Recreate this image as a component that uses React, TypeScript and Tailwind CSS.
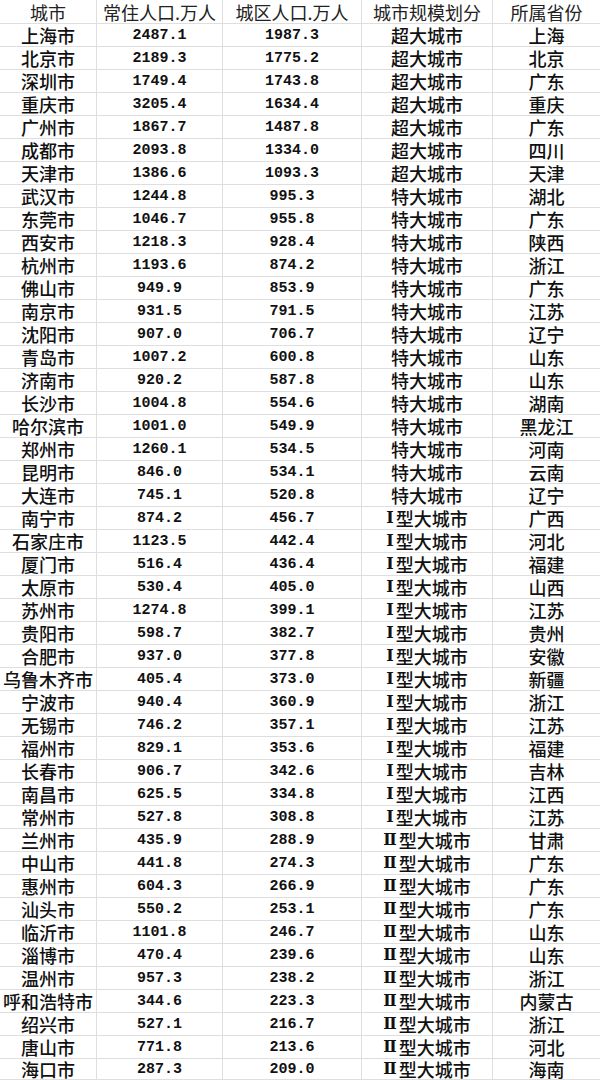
const rows: [string, string, string, string, string][] = [
  ["上海市", "2487.1", "1987.3", "超大城市", "上海"],
  ["北京市", "2189.3", "1775.2", "超大城市", "北京"],
  ["深圳市", "1749.4", "1743.8", "超大城市", "广东"],
  ["重庆市", "3205.4", "1634.4", "超大城市", "重庆"],
  ["广州市", "1867.7", "1487.8", "超大城市", "广东"],
  ["成都市", "2093.8", "1334.0", "超大城市", "四川"],
  ["天津市", "1386.6", "1093.3", "超大城市", "天津"],
  ["武汉市", "1244.8", "995.3", "特大城市", "湖北"],
  ["东莞市", "1046.7", "955.8", "特大城市", "广东"],
  ["西安市", "1218.3", "928.4", "特大城市", "陕西"],
  ["杭州市", "1193.6", "874.2", "特大城市", "浙江"],
  ["佛山市", "949.9", "853.9", "特大城市", "广东"],
  ["南京市", "931.5", "791.5", "特大城市", "江苏"],
  ["沈阳市", "907.0", "706.7", "特大城市", "辽宁"],
  ["青岛市", "1007.2", "600.8", "特大城市", "山东"],
  ["济南市", "920.2", "587.8", "特大城市", "山东"],
  ["长沙市", "1004.8", "554.6", "特大城市", "湖南"],
  ["哈尔滨市", "1001.0", "549.9", "特大城市", "黑龙江"],
  ["郑州市", "1260.1", "534.5", "特大城市", "河南"],
  ["昆明市", "846.0", "534.1", "特大城市", "云南"],
  ["大连市", "745.1", "520.8", "特大城市", "辽宁"],
  ["南宁市", "874.2", "456.7", "Ⅰ", "广西"],
  ["石家庄市", "1123.5", "442.4", "Ⅰ", "河北"],
  ["厦门市", "516.4", "436.4", "Ⅰ", "福建"],
  ["太原市", "530.4", "405.0", "Ⅰ", "山西"],
  ["苏州市", "1274.8", "399.1", "Ⅰ", "江苏"],
  ["贵阳市", "598.7", "382.7", "Ⅰ", "贵州"],
  ["合肥市", "937.0", "377.8", "Ⅰ", "安徽"],
  ["乌鲁木齐市", "405.4", "373.0", "Ⅰ", "新疆"],
  ["宁波市", "940.4", "360.9", "Ⅰ", "浙江"],
  ["无锡市", "746.2", "357.1", "Ⅰ", "江苏"],
  ["福州市", "829.1", "353.6", "Ⅰ", "福建"],
  ["长春市", "906.7", "342.6", "Ⅰ", "吉林"],
  ["南昌市", "625.5", "334.8", "Ⅰ", "江西"],
  ["常州市", "527.8", "308.8", "Ⅰ", "江苏"],
  ["兰州市", "435.9", "288.9", "Ⅱ", "甘肃"],
  ["中山市", "441.8", "274.3", "Ⅱ", "广东"],
  ["惠州市", "604.3", "266.9", "Ⅱ", "广东"],
  ["汕头市", "550.2", "253.1", "Ⅱ", "广东"],
  ["临沂市", "1101.8", "246.7", "Ⅱ", "山东"],
  ["淄博市", "470.4", "239.6", "Ⅱ", "山东"],
  ["温州市", "957.3", "238.2", "Ⅱ", "浙江"],
  ["呼和浩特市", "344.6", "223.3", "Ⅱ", "内蒙古"],
  ["绍兴市", "527.1", "216.7", "Ⅱ", "浙江"],
  ["唐山市", "771.8", "213.6", "Ⅱ", "河北"],
  ["海口市", "287.3", "209.0", "Ⅱ", "海南"],
];

const cjk = "font-['Noto_Sans_CJK_SC',sans-serif] text-[18px] font-medium";
const num = "font-['Liberation_Mono','Noto_Sans_CJK_SC',monospace] text-[15px] font-bold";
const cell = "flex items-center justify-center border-b border-r border-[#dedede] leading-none whitespace-nowrap";

function Scale({ v }: { v: string }) {
  if (v === "Ⅰ" || v === "Ⅱ") {
    return (
      <span className="flex items-center">
        <span className="font-['DejaVu_Serif',serif] text-[16px] font-bold mr-[2px]">{v}</span>
        <span>型大城市</span>
      </span>
    );
  }
  return <span>{v}</span>;
}

export default function App() {
  return (
    <div className="w-[600px] h-[1080px] overflow-hidden bg-white text-[#111]">
      <div className="grid grid-cols-[97px_126px_139px_131px_107px] grid-rows-[24px_repeat(45,23px)_21px] [&>*:nth-child(5n)]:border-r-0">
        <div className={`${cell} ${cjk} text-[#222] font-normal`}>城市</div>
        <div className={`${cell} ${cjk} text-[#222] font-normal`}>常住人口.万人</div>
        <div className={`${cell} ${cjk} text-[#222] font-normal`}>城区人口.万人</div>
        <div className={`${cell} ${cjk} text-[#222] font-normal`}>城市规模划分</div>
        <div className={`${cell} ${cjk} text-[#222] font-normal`}>所属省份</div>
        {rows.map((r) => [
          <div key={r[0] + "a"} className={`${cell} ${cjk}`}>{r[0]}</div>,
          <div key={r[0] + "b"} className={`${cell} ${num}`}>{r[1]}</div>,
          <div key={r[0] + "c"} className={`${cell} ${num}`}>{r[2]}</div>,
          <div key={r[0] + "d"} className={`${cell} ${cjk}`}><Scale v={r[3]} /></div>,
          <div key={r[0] + "e"} className={`${cell} ${cjk}`}>{r[4]}</div>,
        ])}
      </div>
    </div>
  );
}
